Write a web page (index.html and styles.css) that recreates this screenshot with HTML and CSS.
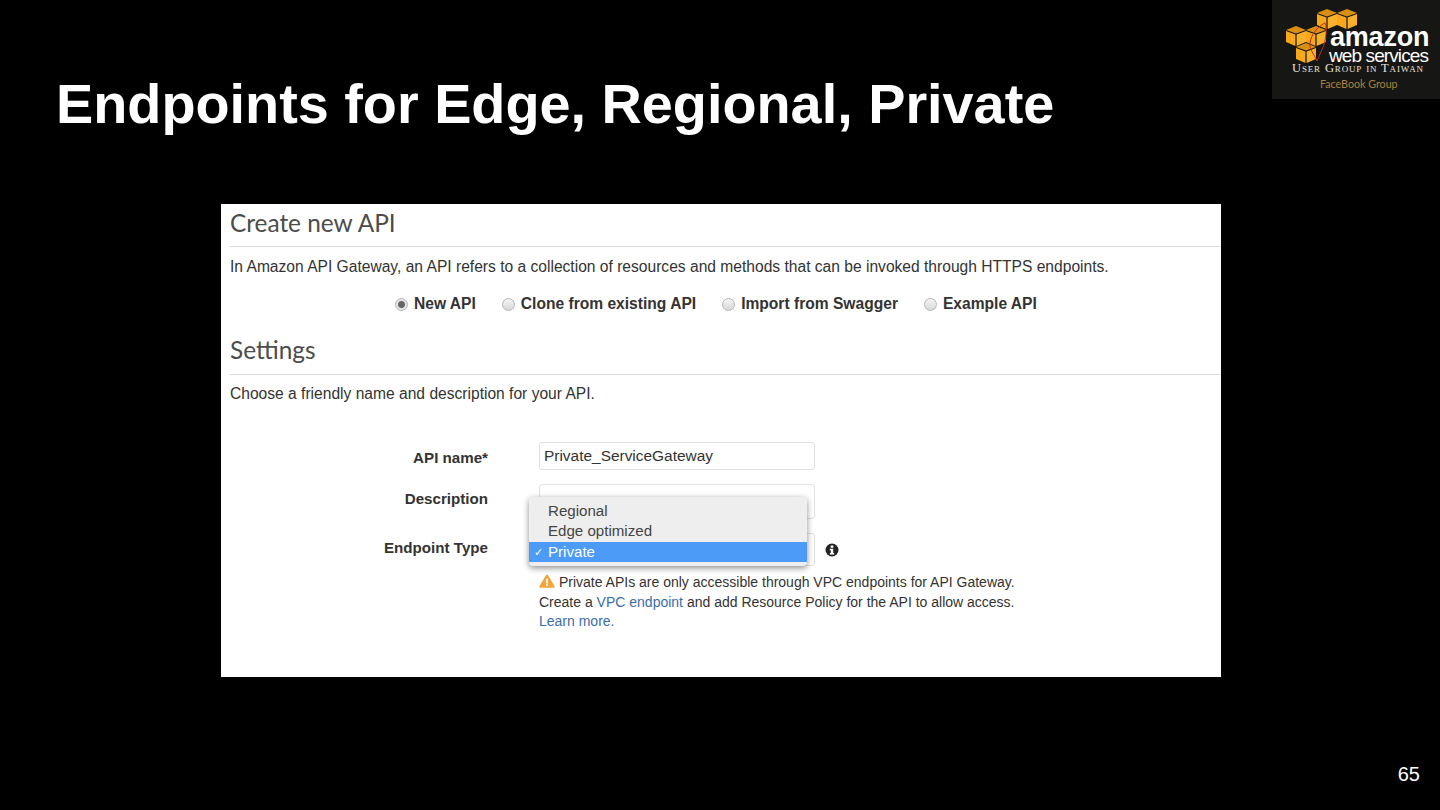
FILE: index.html
```html
<!DOCTYPE html>
<html lang="en">

<head>
    <meta charset="UTF-8">
    <meta name="viewport" content="width=device-width, initial-scale=1.0">
    <title>Endpoints for Edge, Regional, Private</title>
    <link rel="stylesheet" href="styles.css">
</head>

<body>
    <div class="slide">
        <h1 class="slide-title">Endpoints for Edge, Regional, Private</h1>

        <!-- user group logo sits over the corner of the slide -->
        <div class="logo">
            <svg class="logo-cubes" viewBox="0 0 74 62" width="74" height="62">
                <defs>
                    <g id="cube">
                        <path d="M0 4L10 0L20 4L10 7.500z" fill="#d98f14" />
                        <path d="M0 5l9.400 3.500V20L0 16z" fill="#f7a81b" />
                        <path d="M10.600 8.500L20 5v11l-9.400 4z" fill="#f9b02a" />
                    </g>
                </defs>
                <use href="#cube" x="32" y="2" />
                <use href="#cube" x="52" y="2" />
                <use href="#cube" x="1" y="19" />
                <use href="#cube" x="21" y="19" />
                <use href="#cube" x="11" y="36" />
                <path class="logo-island" d="M40 16c-8 4-14 12-15 20-1 6 4 11 7 18 3-8 6-12 8-20 1-6 2-12 0-18z" />
            </svg>
            <p class="logo-amazon">amazon</p>
            <p class="logo-aws">web services</p>
            <p class="logo-group">User Group in Taiwan</p>
            <p class="logo-fb">FaceBook Group</p>
        </div>

        <div class="panel">
            <h2 class="panel-heading">Create new API</h2>
            <p class="panel-text">In Amazon API Gateway, an API refers to a collection of resources and methods that can be invoked through HTTPS endpoints.</p>

            <div class="radio-row">
                <label class="radio-item"><span class="radio radio-on"></span>New API</label>
                <label class="radio-item"><span class="radio"></span>Clone from existing API</label>
                <label class="radio-item"><span class="radio"></span>Import from Swagger</label>
                <label class="radio-item"><span class="radio"></span>Example API</label>
            </div>

            <h2 class="panel-heading settings-heading">Settings</h2>
            <p class="panel-text settings-text">Choose a friendly name and description for your API.</p>

            <div class="form">
                <div class="form-label name-label">API name*</div>
                <div class="field name-field">Private_ServiceGateway</div>

                <div class="form-label desc-label">Description</div>
                <div class="field desc-field"></div>

                <div class="form-label type-label">Endpoint Type</div>
                <div class="type-wrap">
                    <div class="field type-field"></div>
                    <svg class="info-icon" viewBox="0 0 14 14" width="14" height="14">
                        <circle cx="7" cy="7" r="6.500" fill="#222" />
                        <rect x="5.600" y="2.400" width="2.800" height="2.400" rx="0.600" fill="#fff" />
                        <path d="M4.800 5.800h3.400v4.200h1v1.400H4.800V10h1V7.200h-1z" fill="#fff" />
                    </svg>

                    <ul class="dropdown">
                        <li>Regional</li>
                        <li>Edge optimized</li>
                        <li class="dropdown-on">Private</li>
                    </ul>
                </div>

                <div class="notice">
                    <p>
                        <svg class="warn-icon" viewBox="0 0 16 14" width="16" height="14">
                            <path d="M8 0.600c0.500 0 0.900 0.300 1.100 0.700l6.400 10.800c0.400 0.800-0.100 1.700-1 1.700H1.500c-0.900 0-1.400-0.900-1-1.700L6.900 1.300C7.100 0.900 7.500 0.600 8 0.600z" fill="#f0a63a" />
                            <rect x="7.100" y="4.400" width="1.800" height="5" rx="0.500" fill="#fff" />
                            <rect x="7.100" y="10.200" width="1.800" height="1.800" fill="#fff" />
                        </svg>
                        Private APIs are only accessible through VPC endpoints for API Gateway.
                    </p>
                    <p>Create a <a href="#">VPC endpoint</a> and add Resource Policy for the API to allow access.</p>
                    <p><a href="#">Learn more.</a></p>
                </div>
            </div>
        </div>

        <div class="slide-footer">65</div>
    </div>
</body>

</html>
```

FILE: styles.css
```css
* {
    box-sizing: border-box;
    padding: 0;
    margin: 0;
}

body {
    background-color: #000;
    font-family: "Liberation Sans", Arial, sans-serif;
}

.slide {
    position: relative;
    width: 1440px;
    height: 810px;
    overflow: hidden;
    display: flex;
    flex-direction: column;
    background-color: #000;
}

.slide-title {
    margin: 71px 0 0 56px;
    height: 133px;
    font-size: 55.8px;
    line-height: 66px;
    font-weight: bold;
    color: #fff;
}

/* logo */
.logo {
    position: absolute;
    top: 0;
    right: 0;
    width: 168px;
    height: 99px;
    background-color: #161614;
    color: #fff;
}

.logo p {
    position: absolute;
    white-space: nowrap;
}

.logo-cubes {
    position: absolute;
    left: 13px;
    top: 7px;
}

.logo-island {
    fill: none;
    stroke: #c8281e;
    stroke-width: 1;
}

.logo-amazon {
    left: 58px;
    top: 26px;
    font-size: 27px;
    line-height: 22px;
    font-weight: bold;
    letter-spacing: -0.2px;
}

.logo-aws {
    left: 57px;
    top: 48px;
    font-size: 19px;
    line-height: 16px;
    letter-spacing: -0.9px;
}

.logo-group {
    left: 20px;
    top: 62px;
    font-family: "Liberation Serif", serif;
    font-size: 12.5px;
    line-height: 12px;
    font-variant: small-caps;
    letter-spacing: 0.85px;
    color: #e8e4dc;
}

.logo-fb {
    left: 48px;
    top: 77px;
    font-family: Lato, sans-serif;
    font-size: 10.7px;
    line-height: 13px;
    color: #a8823c;
}

/* screenshot panel */
.panel {
    width: 1000px;
    height: 473px;
    margin-left: 221px;
    padding: 0 0 0 9px;
    background-color: #fff;
    color: #333;
}

.panel-heading {
    height: 43px;
    border-bottom: 1px solid #ddd;
    font-family: Lato, sans-serif;
    font-size: 24.4px;
    line-height: 38px;
    font-weight: normal;
    color: #4c4c4c;
}

.settings-heading {
    height: 44px;
}

.panel-text {
    margin-top: 10px;
    font-size: 15.6px;
    line-height: 20px;
    color: #333;
}

.settings-text {
    margin-top: 9px;
}

.radio-row {
    display: flex;
    gap: 26px;
    height: 54px;
    padding: 17px 0 0 165px;
}

.radio-item {
    display: flex;
    align-items: center;
    gap: 6px;
    height: 20px;
    font-size: 15.6px;
    font-weight: bold;
    color: #333;
}

.radio {
    width: 13px;
    height: 13px;
    border: 1px solid #b5b5b5;
    border-radius: 50%;
    background: linear-gradient(#f4f4f4, #d8d8d8);
}

.radio-on {
    background: radial-gradient(circle, #666 0 3px, #e4e4e4 4px);
}

/* form */
.form {
    display: grid;
    grid-template-columns: 258px 1fr;
    column-gap: 51px;
    grid-template-rows: 28px 35px 33px auto;
    row-gap: 14px;
    margin-top: 38px;
}

.form-label {
    font-size: 15.15px;
    line-height: 20px;
    font-weight: bold;
    text-align: right;
    color: #333;
}

.name-label {
    padding-top: 6px;
}

.desc-label {
    padding-top: 5px;
}

.type-label {
    padding-top: 5px;
}

.field {
    width: 276px;
    border: 1px solid #e2e2e2;
    border-radius: 3px;
    padding: 0 4px;
    font-size: 15.45px;
    line-height: 26px;
    color: #333;
    background-color: #fff;
}

.name-field {
    height: 28px;
}

.desc-field {
    height: 35px;
}

.type-wrap {
    position: relative;
    display: flex;
    align-items: center;
    gap: 10px;
}

.type-field {
    height: 33px;
}

.info-icon {
    flex: none;
}

.dropdown {
    position: absolute;
    left: -10px;
    top: -36px;
    width: 278px;
    height: 69px;
    padding-top: 4px;
    list-style: none;
    background-color: #eeeeee;
    border-radius: 4px;
    box-shadow: 0 2px 6px rgba(0, 0, 0, 0.45);
    font-size: 15.1px;
    line-height: 20.3px;
    color: #444;
}

.dropdown li {
    padding-left: 19px;
}

.dropdown-on {
    position: relative;
    background-color: #4b9bf7;
    color: #fff;
}

.dropdown-on::before {
    content: "✓";
    position: absolute;
    left: 5px;
    font-size: 11px;
}

.notice {
    grid-column: 2;
    margin-top: -7px;
    font-size: 14px;
    line-height: 19.5px;
    color: #333;
}

.notice a {
    color: #3b6ea8;
    text-decoration: none;
}

.warn-icon {
    vertical-align: -1px;
}

.slide-footer {
    position: absolute;
    right: 20px;
    top: 762px;
    font-size: 20px;
    line-height: 24px;
    color: #fff;
}
```
